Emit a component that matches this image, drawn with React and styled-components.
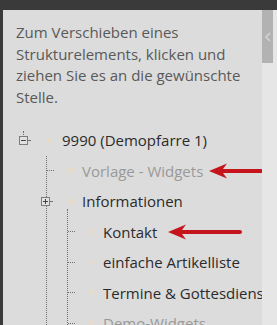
import React from "react"
import styled, { createGlobalStyle } from "styled-components"

const GlobalStyle = createGlobalStyle`
  html, body {
    margin: 0;
    padding: 0;
    background: #3a3a3a;
  }
`

const Frame = styled.div`
  height: 325px;
  padding: 10px 0 0 3px;
  box-sizing: border-box;
  overflow: hidden;
  display: flex;
  font-family: "Open Sans", "Liberation Sans", sans-serif;
`

const Main = styled.div`
  width: 259px;
  flex-shrink: 0;
  background: #dcdcdc;
  overflow: hidden;
  padding: 12px 13px 0 13px;
  box-sizing: border-box;
`

const Side = styled.div`
  flex: 1;
  background: #e6e6e6;
`

const Tab = styled.div`
  width: 11px;
  height: 53px;
  background: #b2b2b2;
  display: flex;
  align-items: center;
  justify-content: center;
`

const Intro = styled.p`
  margin: 0;
  width: 233px;
  font-size: 15px;
  line-height: 21.5px;
  color: #595959;
`

const Tree = styled.div`
  margin-top: 17px;
  white-space: nowrap;
`

const Children = styled.div`
  margin-left: ${(p) => p.$indent}px;
  border-left: 1px dotted #6f6f6f;
  margin-top: ${(p) => (p.$lift ? -8 : 0)}px;
  padding-top: ${(p) => (p.$lift ? 8 : 0)}px;
`

const Row = styled.div`
  height: 30.5px;
  display: flex;
  align-items: center;
`

const Connector = styled.span`
  width: ${(p) => p.$w || 7}px;
  height: 0;
  border-top: 1px dotted #6f6f6f;
  flex-shrink: 0;
`

const ToggleCell = styled.span`
  position: relative;
  display: flex;
  align-items: center;
  margin-left: ${(p) => p.$offset}px;
  flex-shrink: 0;
`

const StubUp = styled.span`
  position: absolute;
  left: 4px;
  top: -5px;
  height: 4px;
  border-left: 1px dotted #6f6f6f;
`

const Toggle = styled.span`
  position: relative;
  width: 9px;
  height: 9px;
  box-sizing: border-box;
  border: 1px solid #7d7d7d;
  background: #e2e2e2;
  flex-shrink: 0;
  &::before {
    content: "";
    position: absolute;
    left: 1px;
    right: 1px;
    top: 3px;
    height: 1px;
    background: #444;
  }
  &::after {
    content: "";
    display: ${(p) => (p.$open ? "none" : "block")};
    position: absolute;
    top: 1px;
    bottom: 1px;
    left: 3px;
    width: 1px;
    background: #444;
  }
`

const Bullet = styled.span`
  width: 5px;
  height: 5px;
  background: #e7dccb;
  margin-left: ${(p) => p.$gap}px;
  flex-shrink: 0;
`

const Label = styled.span`
  margin-left: ${(p) => p.$gap || 9}px;
  font-size: 15px;
  color: ${(p) => (p.$muted ? "#999999" : "#2b2b2b")};
`

const ArrowWrap = styled.span`
  display: inline-flex;
  margin-left: ${(p) => p.$gap}px;
  flex-shrink: 0;
`

const Arrow = ({ width, gap }) => (
  <ArrowWrap $gap={gap}>
    <svg width={width} height="16" viewBox={`0 0 ${width} 16`}>
      <path
        d={`M0 8 L18 0.5 L14 6 L${width - 2} 6 Q${width} 6 ${width} 8 Q${width} 10 ${width - 2} 10 L14 10 L18 15.5 Z`}
        fill="#c5141b"
      />
    </svg>
  </ArrowWrap>
)

const App = () => (
  <>
    <GlobalStyle />
    <Frame>
      <Main>
        <Intro>
          Zum Verschieben eines Strukturelements, klicken und ziehen Sie es
          an die gewünschte Stelle.
        </Intro>
        <Tree>
          <Row>
            <ToggleCell $offset={3}>
              <StubUp />
              <Toggle $open />
              <Connector $w={2} />
            </ToggleCell>
            <Bullet $gap={17} />
            <Label $gap={10}>9990 (Demopfarre 1)</Label>
          </Row>
          <Children $indent={30}>
            <Row>
              <Connector />
              <Bullet $gap={14} />
              <Label $muted>Vorlage - Widgets</Label>
              <Arrow width={54} gap={6} />
            </Row>
            <Row>
              <ToggleCell $offset={-6}>
                <Toggle />
                <Connector $w={2} />
              </ToggleCell>
              <Bullet $gap={16} />
              <Label>Informationen</Label>
            </Row>
            <Children $indent={20} $lift>
              <Row>
                <Connector />
                <Bullet $gap={14} />
                <Label>Kontakt</Label>
                <Arrow width={74} gap={11} />
              </Row>
              <Row>
                <Connector />
                <Bullet $gap={14} />
                <Label>einfache Artikelliste</Label>
              </Row>
              <Row>
                <Connector />
                <Bullet $gap={14} />
                <Label>Termine &amp; Gottesdienste</Label>
              </Row>
              <Row>
                <Connector />
                <Bullet $gap={14} />
                <Label $muted>Demo-Widgets</Label>
              </Row>
            </Children>
          </Children>
        </Tree>
      </Main>
      <Side>
        <Tab>
          <svg width="6" height="10" viewBox="0 0 6 10">
            <path d="M5 1 L1 5 L5 9" fill="none" stroke="#d2d2d2" strokeWidth="1.6" />
          </svg>
        </Tab>
      </Side>
    </Frame>
  </>
)

export default App
